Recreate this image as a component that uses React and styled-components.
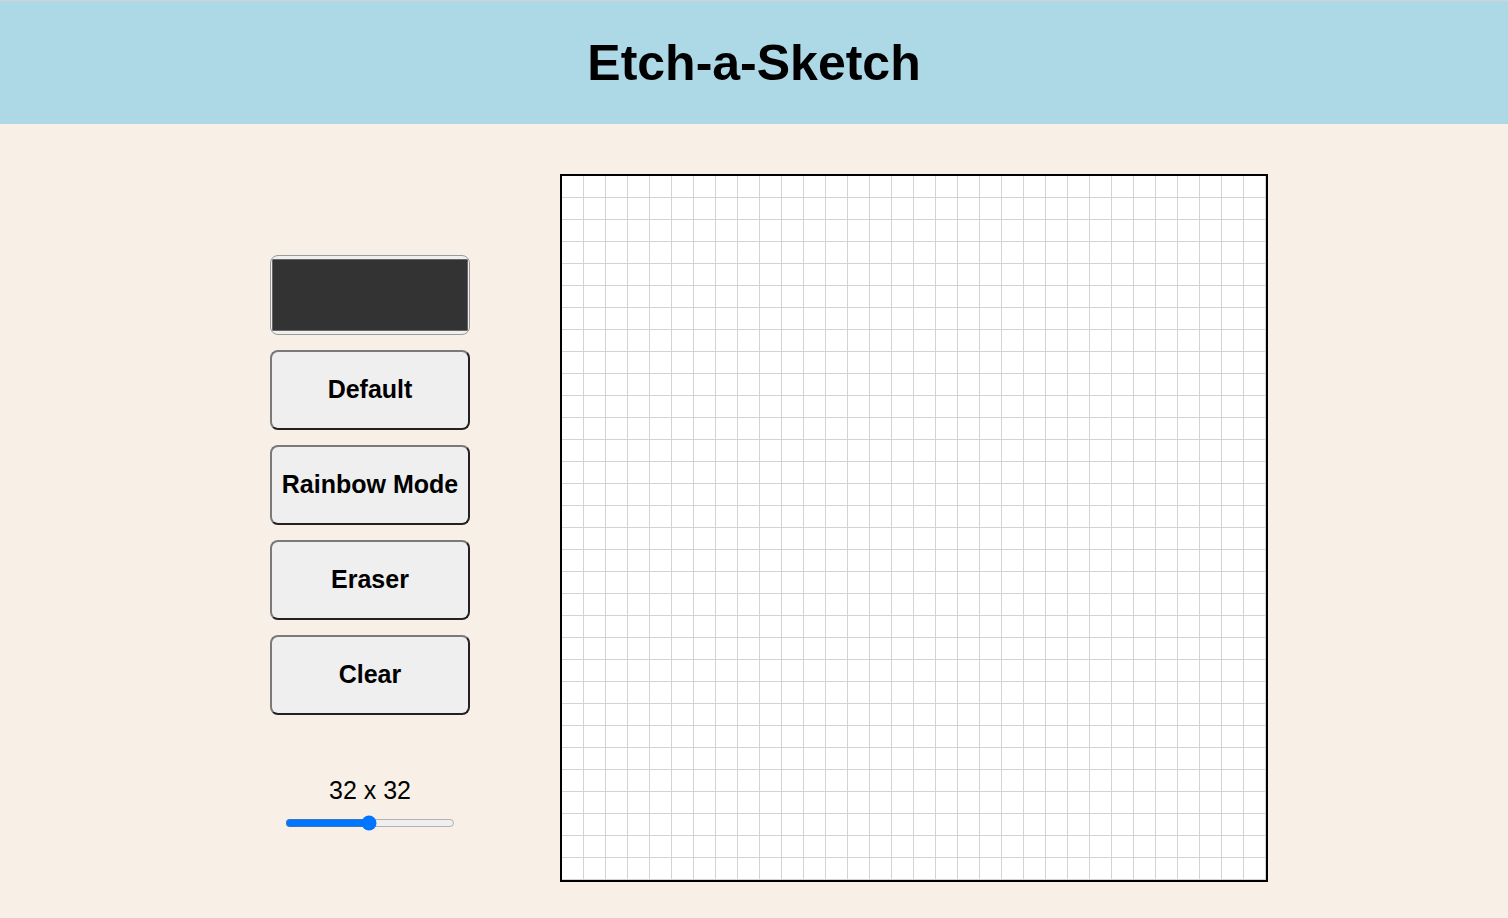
import React from "react"
import styled, { createGlobalStyle } from "styled-components"

const GRID_SIZE = 32
const CELL = 22

const GlobalStyle = createGlobalStyle`
	body {
		margin: 0;
		background: #f8f0e6;
		font-family: "Liberation Sans", Arial, sans-serif;
	}
`

const HeaderElement = styled.header`
	height: 123px;
	border-top: 1px solid #d3d3d3;
	background: #add8e6;
	display: flex;
	align-items: center;
	justify-content: center;
`

const TitleElement = styled.h1`
	margin: 0;
	font-size: 50px;
	font-weight: 700;
	color: #000;
`

const MainElement = styled.main`
	display: flex;
	flex-direction: row;
	justify-content: center;
	align-items: flex-start;
	gap: 60px;
	padding-top: 50px;
`

const ControlsElement = styled.div`
	width: 260px;
	padding-top: 81px;
	display: flex;
	flex-direction: column;
	align-items: center;
	gap: 15px;
`

const ColorInput = styled.input`
	-webkit-appearance: none;
	appearance: none;
	box-sizing: border-box;
	width: 200px;
	height: 80px;
	margin: 0;
	padding: 0;
	border: 1px solid #9a9a9a;
	border-radius: 8px;
	background: #efefef;
	cursor: pointer;

	&::-webkit-color-swatch-wrapper {
		padding: 3px 1px;
	}

	&::-webkit-color-swatch {
		border: 1px solid #666;
		border-radius: 1px;
	}
`

const ModeButton = styled.button`
	box-sizing: border-box;
	width: 200px;
	height: 80px;
	margin: 0;
	padding-bottom: 2px;
	border-style: solid;
	border-width: 2px;
	border-color: #7a7a7a #222 #222 #7a7a7a;
	border-radius: 8px;
	background: ${props => (props.$active ? "#e2e2e2" : "#efefef")};
	color: #000;
	font-family: "Liberation Sans", Arial, sans-serif;
	font-size: 25px;
	font-weight: 700;
	cursor: pointer;
`

const SizeElement = styled.div`
	margin-top: 46px;
	display: flex;
	flex-direction: column;
	align-items: center;
	gap: 10px;
`

const SizeLabel = styled.span`
	font-size: 25px;
	color: #000;
`

const SizeSlider = styled.input`
	width: 170px;
	margin: 0;
	accent-color: #0075ff;
`

const BoardElement = styled.div`
	width: ${GRID_SIZE * CELL}px;
	height: ${GRID_SIZE * CELL}px;
	border: 2px solid #000;
	background: #fff;
	display: grid;
	grid-template-columns: repeat(${props => props.$size}, 1fr);
	grid-template-rows: repeat(${props => props.$size}, 1fr);
`

const CellElement = styled.div`
	box-sizing: border-box;
	border-right: 1px solid #d3d3d3;
	border-bottom: 1px solid #d3d3d3;
`

function Board({ size, colors, onPaint }) {
	const cells = []
	for (let i = 0; i < size * size; i++) {
		cells.push(
			<CellElement
				key={i}
				style={colors[i] ? { background: colors[i] } : undefined}
				onMouseOver={() => onPaint(i)}
			/>
		)
	}
	return <BoardElement $size={size}>{cells}</BoardElement>
}

function App() {
	const [ color, setColor ] = React.useState("#333333")
	const [ mode, setMode ] = React.useState("default")
	const [ size, setSize ] = React.useState(GRID_SIZE)
	const [ colors, setColors ] = React.useState({})

	function paint(index) {
		let next
		if (mode === "eraser") next = null
		else if (mode === "rainbow") next = `hsl(${Math.floor(Math.random() * 360)}, 80%, 55%)`
		else next = color
		setColors(prev => ({ ...prev, [index]: next }))
	}

	return (
		<>
			<GlobalStyle />
			<HeaderElement>
				<TitleElement>Etch-a-Sketch</TitleElement>
			</HeaderElement>
			<MainElement>
				<ControlsElement>
					<ColorInput
						type="color"
						value={color}
						onChange={e => setColor(e.target.value)}
					/>
					<ModeButton onClick={() => setMode("default")}>Default</ModeButton>
					<ModeButton onClick={() => setMode("rainbow")}>Rainbow Mode</ModeButton>
					<ModeButton onClick={() => setMode("eraser")}>Eraser</ModeButton>
					<ModeButton onClick={() => setColors({})}>Clear</ModeButton>
					<SizeElement>
						<SizeLabel>{size} x {size}</SizeLabel>
						<SizeSlider
							type="range"
							min="1"
							max="64"
							value={size}
							onChange={e => {
								setSize(Number(e.target.value))
								setColors({})
							}}
						/>
					</SizeElement>
				</ControlsElement>
				<Board size={size} colors={colors} onPaint={paint} />
			</MainElement>
		</>
	)
}

export default App
